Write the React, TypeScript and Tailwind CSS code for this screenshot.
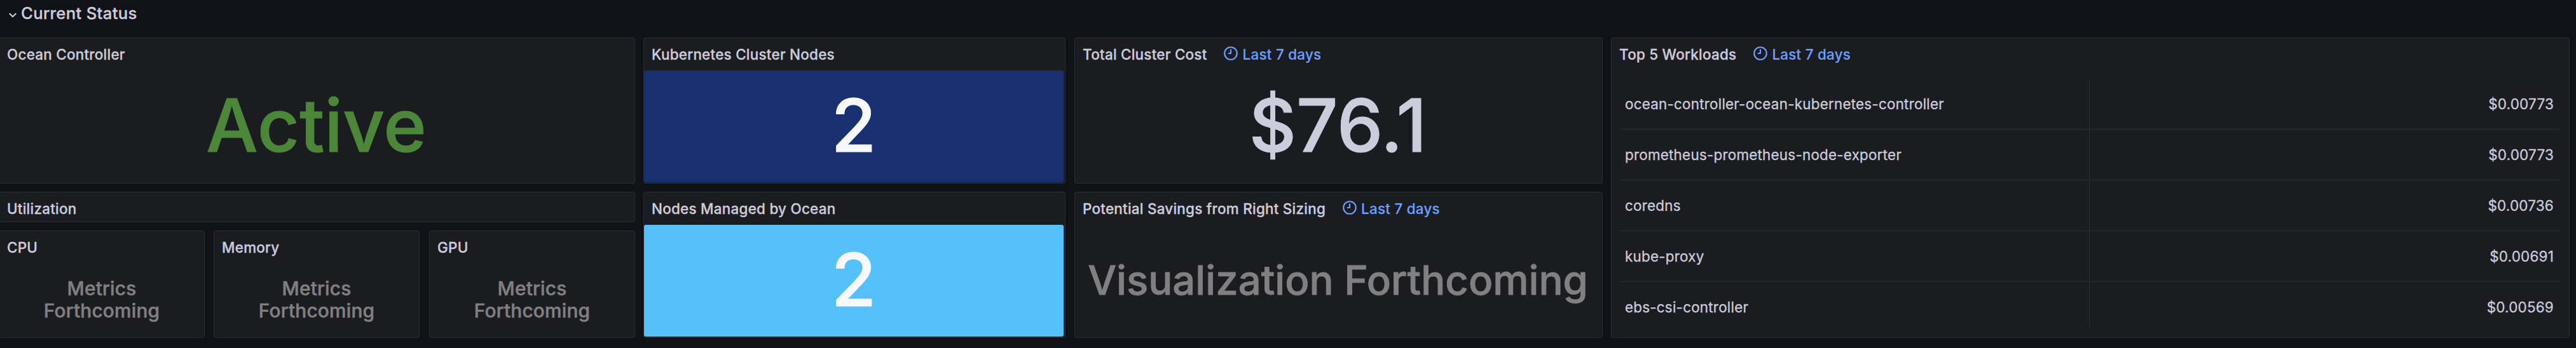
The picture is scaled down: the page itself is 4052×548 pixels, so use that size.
import type { ReactNode } from 'react';
import clsx from 'clsx';

const workloads = [
  { name: 'ocean-controller-ocean-kubernetes-controller', cost: '$0.00773' },
  { name: 'prometheus-prometheus-node-exporter', cost: '$0.00773' },
  { name: 'coredns', cost: '$0.00736' },
  { name: 'kube-proxy', cost: '$0.00691' },
  { name: 'ebs-csi-controller', cost: '$0.00569' },
];

function ClockIcon() {
  return (
    <svg viewBox="0 0 24 24" className="-mt-[3px] size-[26px] shrink-0" fill="currentColor" aria-hidden="true">
      <path d="M12,2A10,10,0,1,0,22,12,10,10,0,0,0,12,2Zm0,18a8,8,0,1,1,8-8A8,8,0,0,1,12,20ZM12,6a1,1,0,0,0-1,1v4H9a1,1,0,0,0,0,2h3a1,1,0,0,0,1-1V7A1,1,0,0,0,12,6Z" />
    </svg>
  );
}

function AngleDownIcon() {
  return (
    <svg viewBox="0 0 24 24" className="mt-[6px] size-[26px] shrink-0" fill="currentColor" aria-hidden="true">
      <path d="M17,9.17a1,1,0,0,0-1.41,0L12,12.71,8.46,9.17a1,1,0,0,0-1.41,0,1,1,0,0,0,0,1.42l4.24,4.24a1,1,0,0,0,1.42,0L17,10.59A1,1,0,0,0,17,9.17Z" />
    </svg>
  );
}

type PanelProps = { title: string; timeRange?: string; className?: string; children?: ReactNode };

function Panel({ title, timeRange, className, children }: PanelProps) {
  return (
    <section
      className={clsx('flex flex-col overflow-hidden rounded-[3px] border border-[#2c2d32] bg-[#1b1c20]', className)}
    >
      <header className="flex h-[51px] shrink-0 items-center pl-[12px] text-[22.45px] leading-[34px] font-medium tracking-[0.0107em] whitespace-nowrap [-webkit-text-stroke:0.3px]">
        <h2>{title}</h2>
        {timeRange && (
          <div className="ml-[24.5px] flex items-center gap-[5.5px] text-[#6e9fff] [-webkit-text-stroke:0.15px]">
            <ClockIcon />
            <span>{timeRange}</span>
          </div>
        )}
      </header>
      {children}
    </section>
  );
}

function Stat({ className, children }: { className: string; children: ReactNode }) {
  return (
    <div
      className={clsx(
        'mr-[2px] mb-px flex flex-1 items-center justify-center rounded-[3px] pb-[2px] text-center leading-[1.2] font-medium',
        className,
      )}
    >
      {children}
    </div>
  );
}

export default function App() {
  return (
    <main className="h-[548px] w-[4052px] overflow-hidden bg-[#111217] font-['Inter',sans-serif] text-[#ccccdc]">
      <div className="flex h-[59px] items-start pt-[5px] pl-[7px]">
        <AngleDownIcon />
        <h1 className="text-[25.7px] leading-8 font-medium tracking-[0.0125em] [-webkit-text-stroke:0.3px]">
          Current Status
        </h1>
      </div>

      <div className="-ml-[2px] flex h-[473px]">
        <div className="mr-[13px] flex w-[1001px] flex-col">
          <Panel title="Ocean Controller" className="mb-[13px] h-[230px]">
            <Stat className="text-[115px] text-[#4c8638] [-webkit-text-stroke:1px]">Active</Stat>
          </Panel>
          <Panel title="Utilization" className="mb-[13px] h-[48px]" />
          <div className="grid flex-1 grid-cols-[324px_324px_324px] gap-x-[14px]">
            {['CPU', 'Memory', 'GPU'].map((name) => (
              <Panel key={name} title={name} className="last:ml-px last:-mr-px">
                <Stat className="pl-[2px] text-[29.8px] leading-[35px] tracking-[0.2px] text-[#808080] [-webkit-text-stroke:0.5px]">
                  Metrics
                  <br />
                  Forthcoming
                </Stat>
              </Panel>
            ))}
          </div>
        </div>

        <div className="mr-[14px] flex w-[664px] flex-col gap-[13px]">
          <Panel title="Kubernetes Cluster Nodes" className="h-[230px]">
            <Stat className="bg-[#18306f] text-[115px] text-[#f7f8fa] [-webkit-text-stroke:1px]">2</Stat>
          </Panel>
          <Panel title="Nodes Managed by Ocean" className="h-[230px]">
            <Stat className="bg-[#56c0fa] text-[115px] text-[#f7f8fa] [-webkit-text-stroke:1px]">2</Stat>
          </Panel>
        </div>

        <div className="mr-[13px] flex w-[831px] flex-col gap-[13px]">
          <Panel title="Total Cluster Cost" timeRange="Last 7 days" className="h-[230px]">
            <Stat className="text-[115px] [-webkit-text-stroke:1px]">$76.1</Stat>
          </Panel>
          <Panel title="Potential Savings from Right Sizing" timeRange="Last 7 days" className="h-[230px]">
            <Stat className="text-[63.4px] whitespace-nowrap text-[#808080] [-webkit-text-stroke:0.8px]">
              Visualization Forthcoming
            </Stat>
          </Panel>
        </div>

        <Panel title="Top 5 Workloads" timeRange="Last 7 days" className="w-[1508px]">
          <div className="mt-[13px] mr-[14px] ml-3 h-[393px] overflow-hidden text-[22.4px] tracking-[0.0107em] [-webkit-text-stroke:0.3px]">
            {workloads.map((w) => (
              <div key={w.name} className="flex h-[80px] border-b border-[#2e2f34] pb-px">
                <div className="flex w-[740px] items-center border-r border-[#2e2f34] pt-[2px] pl-[9px]">{w.name}</div>
                <div className="flex flex-1 items-center justify-end pt-[2px] pr-[10px]">{w.cost}</div>
              </div>
            ))}
          </div>
        </Panel>
      </div>
    </main>
  );
}
